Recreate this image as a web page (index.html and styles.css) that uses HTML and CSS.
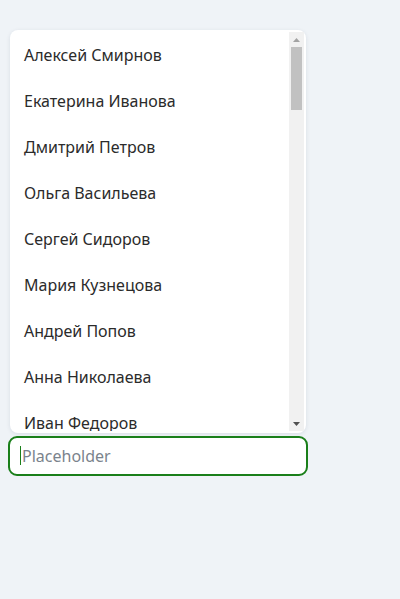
FILE: index.html
```html
<!DOCTYPE html>
<html lang="ru">
<head>
<meta charset="utf-8">
<link rel="stylesheet" href="styles.css">
</head>
<body>
<div class="combo">
  <div class="panel">
    <ul class="list" role="listbox">
      <li>Алексей Смирнов</li>
      <li>Екатерина Иванова</li>
      <li>Дмитрий Петров</li>
      <li>Ольга Васильева</li>
      <li>Сергей Сидоров</li>
      <li>Мария Кузнецова</li>
      <li>Андрей Попов</li>
      <li>Анна Николаева</li>
      <li>Иван Федоров</li>
    </ul>
    <div class="scrollbar" aria-hidden="true">
      <div class="sb-btn">
        <svg width="7" height="4" viewBox="0 0 7 4"><polygon points="3.5,0 7,4 0,4" fill="#a3a3a3"/></svg>
      </div>
      <div class="sb-track">
        <div class="sb-thumb"></div>
      </div>
      <div class="sb-btn">
        <svg width="7" height="4" viewBox="0 0 7 4"><polygon points="0,0 7,0 3.5,4" fill="#505050"/></svg>
      </div>
    </div>
  </div>
  <div class="field-wrap">
    <input class="field" type="text" placeholder="Placeholder" autofocus>
    <span class="caret" aria-hidden="true"></span>
  </div>
</div>
</body>
</html>
```

FILE: styles.css
```css
html, body {
  margin: 0;
  padding: 0;
  background: #eff3f7;
}
body {
  padding: 8px;
  font-family: "Noto Sans", "DejaVu Sans", sans-serif;
}
.combo {
  width: 300px;
  padding-top: 22px;
  display: flex;
  flex-direction: column;
  gap: 3px;
}
.panel {
  margin: 0 2px;
  background: #ffffff;
  border-radius: 8px;
  padding: 2px;
  box-shadow: 0 1px 4px rgba(20, 40, 70, 0.10);
  display: flex;
  height: 399px;
}
.list {
  flex: 1;
  list-style: none;
  margin: 0;
  padding: 0;
  overflow: hidden;
}
.list li {
  height: 46px;
  padding: 0 12px;
  display: flex;
  align-items: center;
  font-size: 16px;
  color: #2b2b2b;
  white-space: nowrap;
}
.scrollbar {
  width: 15px;
  flex: none;
  background: #f1f1f1;
  display: flex;
  flex-direction: column;
}
.sb-btn {
  height: 15px;
  flex: none;
  display: flex;
  align-items: center;
  justify-content: center;
}
.sb-btn svg {
  display: block;
}
.sb-track {
  flex: 1;
  padding: 0 2px;
}
.sb-thumb {
  height: 63px;
  background: #c1c1c1;
}
.field-wrap {
  position: relative;
  width: 300px;
  height: 40px;
}
.field {
  box-sizing: border-box;
  width: 300px;
  height: 40px;
  margin: 0;
  border: 2px solid #1a7f1a;
  border-radius: 9px;
  padding: 0 10px 0 12px;
  font-family: "Noto Sans", "DejaVu Sans", sans-serif;
  font-size: 16px;
  color: #2b2b2b;
  background: #ffffff;
  outline: none;
  caret-color: transparent;
}
.field::placeholder {
  color: #7b838c;
}
.caret {
  position: absolute;
  left: 12px;
  top: 10px;
  width: 1px;
  height: 19px;
  background: #1a7f1a;
  pointer-events: none;
}
```
